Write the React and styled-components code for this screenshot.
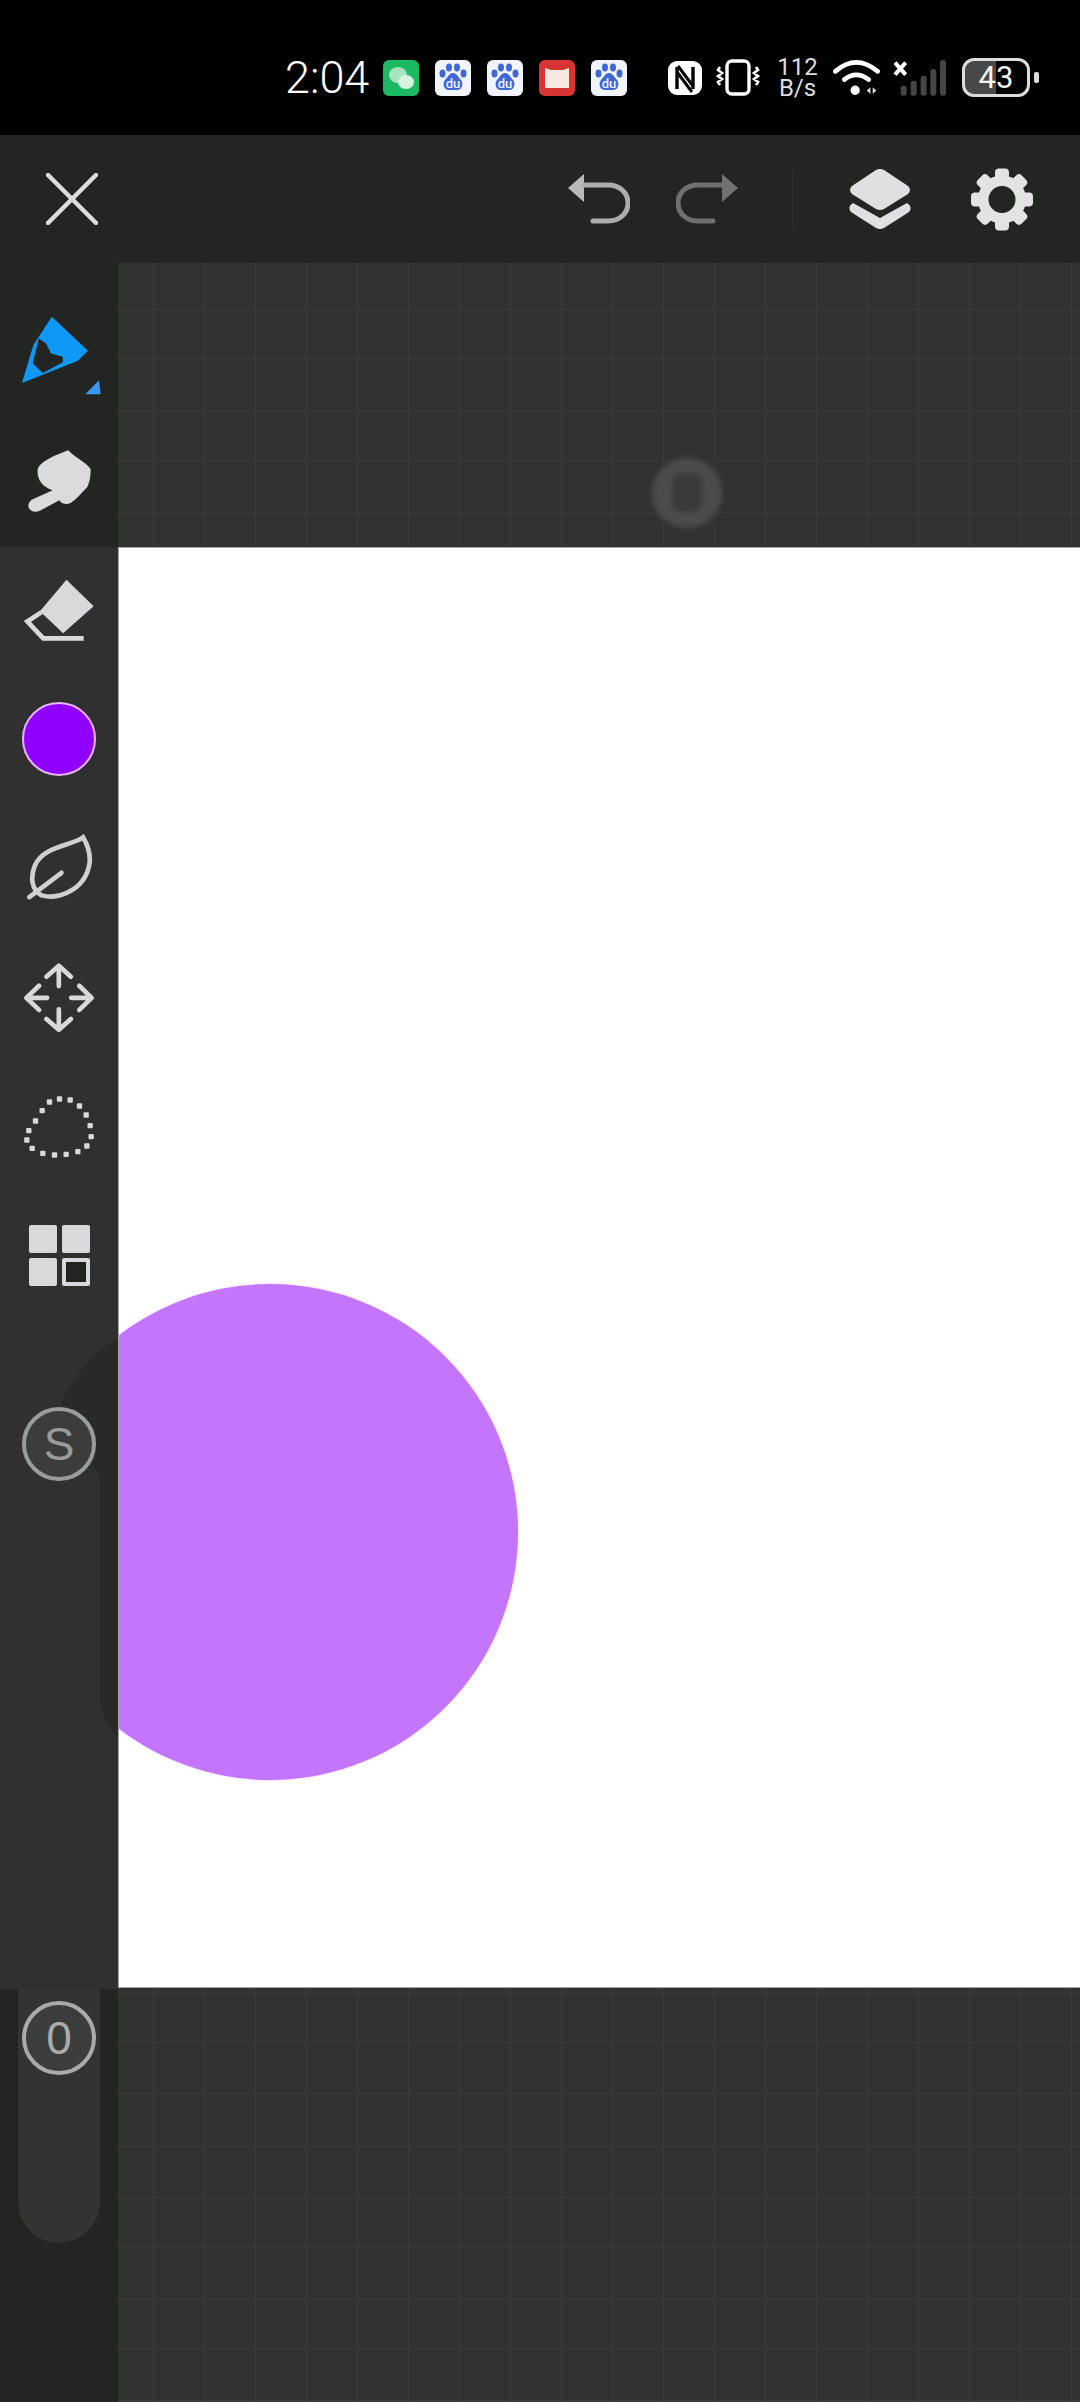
import React from 'react'
import styled, { createGlobalStyle } from 'styled-components'

const GlobalStyle = createGlobalStyle`
  html, body {
    margin: 0;
    padding: 0;
    background: #000;
    font-family: Roboto, "Liberation Sans", sans-serif;
  }
`

const lassoDots = [
  [180, 597], [212, 600], [240, 618], [260, 645], [272, 677], [275, 710], [262, 738], [235, 755],
  [200, 763], [165, 765], [130, 760], [98, 745], [82, 720], [88, 692], [108, 663], [128, 632], [150, 606],
]

const Baidu = ({ ml }) => (
  <StatusIcon $ml={ml} width="36" height="36" viewBox="0 0 36 36">
    <rect width="36" height="36" rx="6" fill="#f1f4fc" />
    <g fill="#3f68d6">
      <ellipse cx="7.5" cy="13.5" rx="3" ry="4" />
      <ellipse cx="14" cy="7.5" rx="3" ry="4" />
      <ellipse cx="22" cy="7.5" rx="3" ry="4" />
      <ellipse cx="28.5" cy="13.5" rx="3" ry="4" />
      <path d="M18 13c4 0 5 4 8 7 3 4 1 10-4 10H14c-5 0-7-6-4-10 3-3 4-7 8-7z" />
    </g>
    <text x="18" y="28" fontSize="13" fontWeight="500" fill="#f1f4fc" textAnchor="middle" fontFamily="Roboto, sans-serif">du</text>
  </StatusIcon>
)

const StatusBarRow = () => (
  <StatusBar>
    <Clock>2:04</Clock>
    <StatusIcon $ml={11} width="36" height="36" viewBox="0 0 36 36">
      <rect width="36" height="36" rx="6" fill="#1cb963" />
      <ellipse cx="15" cy="15" rx="9" ry="8" fill="#a8e4c0" />
      <ellipse cx="23" cy="22" rx="8" ry="7" fill="#d5f3df" />
    </StatusIcon>
    <Baidu ml={16} />
    <Baidu ml={16} />
    <StatusIcon $ml={16} width="36" height="36" viewBox="0 0 36 36">
      <rect width="36" height="36" rx="6" fill="#d83434" />
      <path d="M6 8l6 2h12l6-2v20H6z" fill="#f8e8e0" />
    </StatusIcon>
    <Baidu ml={16} />
    <StatusIcon $ml={41} width="34" height="34" viewBox="0 0 34 34">
      <rect width="34" height="34" rx="9" fill="#fff" />
      <path d="M9 6v22M25 6v22" stroke="#000" strokeWidth="3.4" fill="none" />
      <path d="M10 5l15 20M9 11l15 20" stroke="#000" strokeWidth="3" fill="none" />
    </StatusIcon>
    <StatusIcon $ml={14} width="44" height="37" viewBox="0 0 44 37">
      <rect x="11" y="2" width="22" height="33" rx="5" fill="none" stroke="#fff" strokeWidth="3.4" />
      <path d="M4 8l-2 3 4 3-4 3 4 3-4 3 2 3M40 8l2 3-4 3 4 3-4 3 4 3-2 3" fill="none" stroke="#fff" strokeWidth="2.6" />
    </StatusIcon>
    <Speed $ml={18}>
      <span>112</span>
      <span>B/s</span>
    </Speed>
    <StatusIcon $ml={16} width="47" height="37" viewBox="548 55 142 111">
      <g fill="none" stroke="#fff" strokeWidth="14" strokeLinecap="round">
        <path d="M555 92Q618 38 683 92" />
        <path d="M582 117Q618 88 656 117" />
      </g>
      <circle cx="615" cy="149" r="14" fill="#fff" />
      <path d="M650 150l11-10v20zM668 140l11 10-11 10z" fill="#ddd" />
    </StatusIcon>
    <StatusIcon $ml={13} width="54" height="37" viewBox="730 55 162 111">
      <path d="M736 66l32 36M768 66l-32 36" stroke="#fff" strokeWidth="12" />
      <g fill="#454545">
        <rect x="753" y="135" width="18" height="30" rx="8" />
        <rect x="783" y="120" width="18" height="45" rx="8" />
        <rect x="813" y="105" width="18" height="60" rx="8" />
        <rect x="842" y="85" width="18" height="80" rx="8" />
        <rect x="871" y="58" width="18" height="107" rx="8" />
      </g>
    </StatusIcon>
    <Battery>43</Battery>
    <BatteryNub />
  </StatusBar>
)

const Gear = () => (
  <svg width="62" height="63" viewBox="-31 -31.5 62 63">
    <g fill="#e3e3e3">
      {[0, 45, 90, 135, 180, 225, 270, 315].map(deg => (
        <rect key={deg} x="-7" y="-31" width="14" height="16" rx="4" transform={`rotate(${deg})`} />
      ))}
      <circle r="24" />
    </g>
    <circle r="13.5" fill="#232523" />
  </svg>
)

const TopBar = () => (
  <Toolbar>
    <svg width="52" height="52" viewBox="0 0 52 52">
      <path d="M2 2l48 48M50 2L2 50" stroke="#dcdcdc" strokeWidth="4.5" strokeLinecap="round" />
    </svg>
    <ToolbarActions>
      <svg width="62" height="50" viewBox="570 175 62 50">
        <path d="M570 189l16-14v28z" fill="#b9b9b9" />
        <path d="M586 186h24c12 0 20 8 20 18s-8 18-20 18h-15" fill="none" stroke="#acadac" strokeWidth="5" strokeLinecap="round" />
      </svg>
      <ToolbarSlot $ml={46}>
        <svg width="62" height="50" viewBox="570 175 62 50">
          <g transform="matrix(-1 0 0 1 1202 0)">
            <path d="M570 189l16-14v28z" fill="#707170" />
            <path d="M586 186h24c12 0 20 8 20 18s-8 18-20 18h-15" fill="none" stroke="#6f706f" strokeWidth="5" strokeLinecap="round" />
          </g>
        </svg>
      </ToolbarSlot>
      <ToolbarDivider />
      <ToolbarSlot $ml={56}>
        <svg width="62" height="62" viewBox="849 168 62 62">
          <path d="M876 170q4-2 8 0l24 16q4 4 0 8l-24 15q-4 2-8 0l-24-15q-4-4 0-8z" fill="#e0dfe1" />
          <path d="M853 203l27 15 27-15q6 4 2 9l-25 16q-4 2-8 0l-25-16q-4-5 2-9z" fill="#e0dfe1" />
        </svg>
      </ToolbarSlot>
      <ToolbarSlot $ml={60}>
        <Gear />
      </ToolbarSlot>
    </ToolbarActions>
  </Toolbar>
)

const Tools = () => (
  <ToolGrid>
    <ToolSlot>
      <PenIcon width="82" height="82" viewBox="65 555 245 245">
        <path
          fillRule="evenodd"
          fill="#0d99f5"
          d="M157 560L265 662 235 692 68 758 102 645zM118 625L100 700 130 728 190 696 190 680 155 670 140 640z"
        />
        <path d="M298 750l5 42h-46z" fill="#3d98f5" />
      </PenIcon>
    </ToolSlot>
    <ToolSlot>
      <svg width="66" height="66" viewBox="78 955 198 198">
        <path
          fill="#dbdadc"
          d="M205 962C225 985 255 995 272 1018 272 1040 270 1055 262 1072 245 1090 228 1110 212 1120 200 1126 185 1124 178 1112L118 1144C92 1154 72 1128 95 1110L158 1082C128 1072 110 1050 113 1020 118 995 170 975 205 962z"
        />
      </svg>
    </ToolSlot>
    <ToolSlot>
      <svg width="72" height="63" viewBox="70 25 215 190">
        <path d="M200 30L282 110 190 192 120 125z" fill="#d9d8da" />
        <path d="M125 128L82 156 130 207H252" fill="none" stroke="#d9d8da" strokeWidth="14" />
      </svg>
    </ToolSlot>
    <ToolSlot>
      <ColorSwatch />
    </ToolSlot>
    <ToolSlot>
      <svg width="68" height="68" viewBox="75 795 205 205">
        <g fill="none" stroke="#d0d0d1" strokeWidth="14" strokeLinecap="round">
          <path d="M250 805C220 830 130 830 105 890 90 925 95 965 125 980 180 995 260 960 270 880 272 850 262 825 250 805z" />
          <path d="M88 985L185 912" />
        </g>
      </svg>
    </ToolSlot>
    <ToolSlot>
      <svg width="72" height="71" viewBox="70 188 215 212">
        <g fill="none" stroke="#d9d8da" strokeWidth="14" strokeLinecap="round" strokeLinejoin="round">
          <path d="M177 200v60M140 232l37-33 36 33" />
          <path d="M84 295h58M118 259l-38 36 38 36" />
          <path d="M214 295h58M238 259l37 36-37 36" />
          <path d="M177 329v58M140 358l37 32 36-32" />
        </g>
      </svg>
    </ToolSlot>
    <ToolSlot>
      <svg width="75" height="66" viewBox="68 582 224 198">
        <g fill="#d9d8da">
          {lassoDots.map(([x, y]) => (
            <rect key={`${x}-${y}`} x={x - 8} y={y - 8} width="16" height="16" rx="3" />
          ))}
        </g>
      </svg>
    </ToolSlot>
    <ToolSlot>
      <Tiles>
        <Tile />
        <Tile />
        <Tile />
        <Tile $outlined />
      </Tiles>
    </ToolSlot>
  </ToolGrid>
)

const App = () => (
  <Screen>
    <GlobalStyle />
    <StatusBarRow />
    <TopBar />
    <Body>
      <Sidebar>
        <CircleGhost width="57" height="400" viewBox="0 0 57 400">
          <path d="M57 0C35 10 15 35 0 63L39 140V360Q39 377 57 398z" fill="#292929" />
        </CircleGhost>
        <Tools />
        <RoundButton $top={86} $tone="#9a9c9b">S</RoundButton>
        <BottomTray>
          <Pill>
            <RoundButton $tone="#a9abaa">0</RoundButton>
          </Pill>
        </BottomTray>
      </Sidebar>
      <Workspace>
        <GridArea $height={284} $offsetY={45}>
          <TouchDot>
            <TouchCore />
          </TouchDot>
        </GridArea>
        <Canvas>
          <PaintBlob />
        </Canvas>
        <GridArea $height={414} $offsetY={4} />
      </Workspace>
    </Body>
  </Screen>
)

const Screen = styled.div`
  width: 1080px;
  height: 2402px;
  overflow: hidden;
  display: flex;
  flex-direction: column;
`

// status bar
const StatusBar = styled.div`
  height: 135px;
  flex: none;
  box-sizing: border-box;
  padding: 20px 41px 0 285px;
  background: #000;
  display: flex;
  align-items: center;
`
const Clock = styled.span`
  width: 87px;
  font-size: 45px;
  font-weight: 300;
  line-height: 1;
  color: #fff;
  white-space: nowrap;
`
const StatusIcon = styled.svg`
  flex: none;
  margin-left: ${props => props.$ml}px;
`
const Speed = styled.div`
  width: 39px;
  flex: none;
  margin-left: ${props => props.$ml}px;
  display: flex;
  flex-direction: column;
  align-items: center;
  font-size: 24px;
  line-height: 21px;
  color: #dddddd;
`
const Battery = styled.div`
  width: 68px;
  height: 39px;
  flex: none;
  margin-left: 15px;
  box-sizing: border-box;
  border: 3px solid #dcdcdc;
  border-radius: 12px;
  background: linear-gradient(90deg, #484848 0 50%, #000 50%);
  color: #f4f4f4;
  font-size: 31px;
  line-height: 33px;
  text-align: center;
`
const BatteryNub = styled.div`
  width: 5px;
  height: 11px;
  flex: none;
  margin-left: 4px;
  border-radius: 2px;
  background: #dcdcdc;
`

// top toolbar
const Toolbar = styled.div`
  height: 128px;
  flex: none;
  box-sizing: border-box;
  padding: 0 47px 0 46px;
  background: #232523;
  display: flex;
  align-items: center;
  justify-content: space-between;
`
const ToolbarActions = styled.div`
  display: flex;
  align-items: center;
`
const ToolbarSlot = styled.div`
  display: flex;
  margin-left: ${props => props.$ml}px;
`
const ToolbarDivider = styled.div`
  width: 1px;
  height: 60px;
  margin-left: 54px;
  background: #2c2e2c;
`

// left tools
const Body = styled.div`
  flex: 1;
  display: flex;
  min-height: 0;
`
const Sidebar = styled.div`
  width: 118px;
  flex: none;
  position: relative;
  display: flex;
  flex-direction: column;
  align-items: center;
  padding-top: 24px;
  box-sizing: border-box;
  background: linear-gradient(#232523 0 284px, #303030 284px);
`
const CircleGhost = styled.svg`
  position: absolute;
  left: 61px;
  top: 1076px;
`
const ToolGrid = styled.div`
  width: 100%;
  display: grid;
  grid-auto-rows: 129.2px;
  position: relative;
`
const ToolSlot = styled.div`
  display: flex;
  align-items: center;
  justify-content: center;
`
const PenIcon = styled.svg`
  margin: 8px 0 0 6px;
`
const ColorSwatch = styled.div`
  width: 74px;
  height: 74px;
  box-sizing: border-box;
  border: 2px solid #e6b4fa;
  border-radius: 50%;
  background: #9000ff;
`
const Tiles = styled.div`
  display: grid;
  grid-template-columns: 28px 28px;
  grid-auto-rows: 28px;
  gap: 5px;
`
const Tile = styled.div`
  box-sizing: border-box;
  border-radius: 2px;
  background: ${props => (props.$outlined ? '#232523' : '#d9d8da')};
  border: ${props => (props.$outlined ? '4px solid #d9d8da' : 'none')};
`
const RoundButton = styled.div`
  width: 74px;
  height: 74px;
  flex: none;
  position: relative;
  margin-top: ${props => props.$top || 0}px;
  box-sizing: border-box;
  border: 4px solid ${props => props.$tone};
  border-radius: 50%;
  background: #3b3d3d;
  color: ${props => props.$tone};
  font-family: "Liberation Sans", sans-serif;
  font-size: 46px;
  line-height: 66px;
  text-align: center;
`
const BottomTray = styled.div`
  align-self: stretch;
  height: 413px;
  margin-top: auto;
  background: #232523;
  display: flex;
  justify-content: center;
`
const Pill = styled.div`
  width: 82px;
  height: 254px;
  box-sizing: border-box;
  padding: 12px 4px 0;
  background: #323333;
  border-radius: 0 0 41px 41px;
`

// workspace
const Workspace = styled.div`
  flex: 1;
  display: flex;
  flex-direction: column;
  min-width: 0;
`
const GridArea = styled.div`
  height: ${props => props.$height}px;
  flex: none;
  position: relative;
  overflow: hidden;
  background-color: #323232;
  background-image:
    linear-gradient(90deg, #393c3b 1.5px, transparent 1.5px),
    linear-gradient(#393c3b 1.5px, transparent 1.5px);
  background-size: 51px 51px;
  background-position: 35px ${props => props.$offsetY}px;
`
const TouchDot = styled.div`
  position: absolute;
  left: 534px;
  top: 195px;
  width: 70px;
  height: 70px;
  border-radius: 50%;
  background: #4a4c4b;
  filter: blur(2.5px);
  display: flex;
  align-items: center;
  justify-content: center;
`
const TouchCore = styled.div`
  width: 30px;
  height: 38px;
  border-radius: 8px;
  background: #393b3a;
`
const Canvas = styled.div`
  height: 1441px;
  flex: none;
  position: relative;
  overflow: hidden;
  box-sizing: border-box;
  background: #fff;
  border: solid #a5a5a5;
  border-width: 1px 0 1px 1px;
`
const PaintBlob = styled.div`
  position: absolute;
  left: -97px;
  top: 736px;
  width: 496px;
  height: 496px;
  border-radius: 50%;
  background: #c376fd;
  box-shadow: 0 0 3px #eccbff;
`

export default App
